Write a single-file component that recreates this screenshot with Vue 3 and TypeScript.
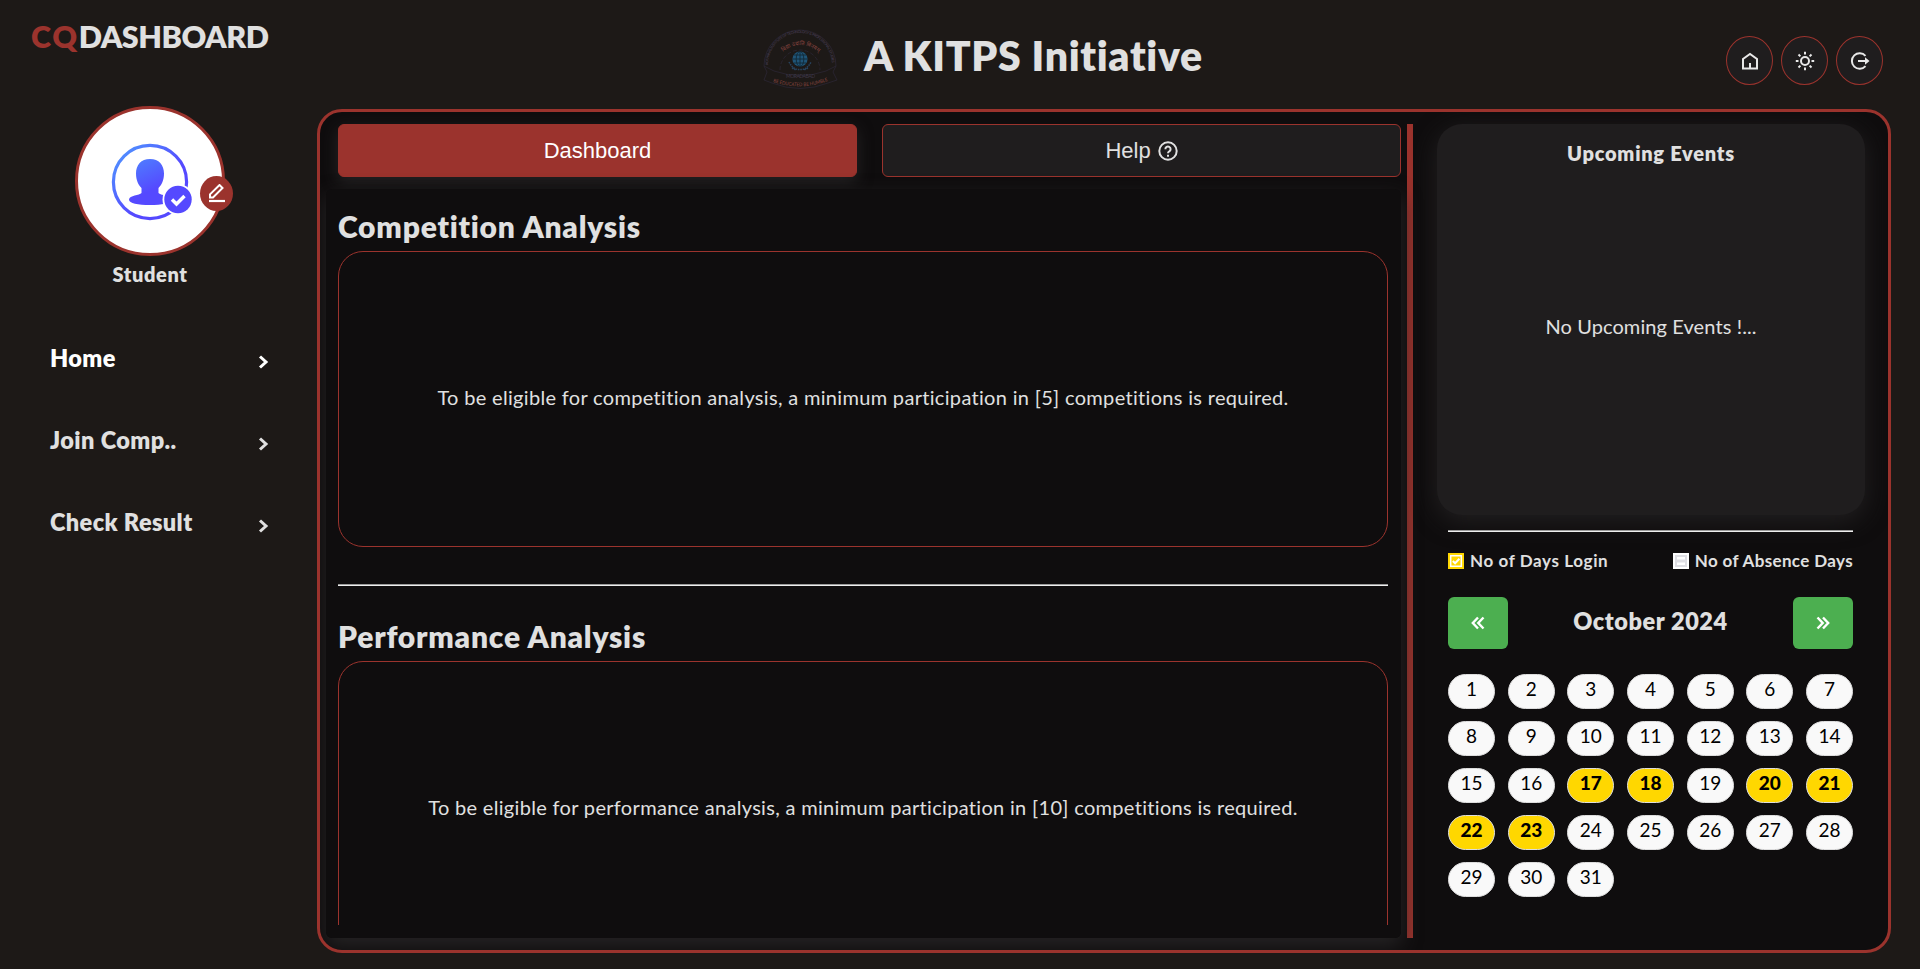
<script setup lang="ts">
interface NavItem { label: string; active: boolean }
const nav: NavItem[] = [
  { label: 'Home', active: true },
  { label: 'Join Comp..', active: false },
  { label: 'Check Result', active: false },
]
const days: number[] = Array.from({ length: 31 }, (_, i) => i + 1)
const loggedIn = new Set<number>([17, 18, 20, 21, 22, 23])
</script>

<template>
  <div class="app">
    <header class="topbar">
      <div class="brand"><span class="cq">CQ</span><span class="dash">DASHBOARD</span></div>
      <div class="initiative">
        <svg class="seal" width="76" height="64" viewBox="0 0 76 64">
          <defs>
            <path id="arc-outer" d="M6 37 A32 32 0 0 1 70 37" />
            <path id="arc-motto" d="M21 24 Q38 10 56 24" />
            <path id="arc-ribbon" d="M11 54 Q38 63 66 53" />
          </defs>
          <g fill="none" stroke="#2b2633" stroke-width=".8">
            <path d="M2 38 A36 36 0 0 1 74 38" />
            <path d="M18 42 A20 20 0 0 1 58 42" stroke-dasharray="4 2" />
            <path d="M2 38l10 5q26 9 52 0l10-5-3 6 4 8-9 3q-28 11-56 0l-8-3 3-8z" />
          </g>
          <text font-size="3.6" fill="#4a4058"><textPath href="#arc-outer" textLength="98">KOTHIWAL INSTITUTE OF TECHNOLOGY &amp; PROFESSIONAL STUDIES</textPath></text>
          <text font-size="5.5" fill="#8a4540"><textPath href="#arc-motto" textLength="39">विद्या ददाति विनयम्</textPath></text>
          <circle cx="38" cy="31" r="7.6" fill="#1f5578" />
          <g fill="none" stroke="#122836" stroke-width=".9">
            <ellipse cx="38" cy="31" rx="3.8" ry="7.6" /><path d="M38 23.400v15.200M30.400 31h15.200M32 27h12M32 35h12" />
          </g>
          <path d="M27 34q4 8 11 7.500q7 .5 11-7.500M30 40l4 2M46 40l-4 2" fill="none" stroke="#28425c" stroke-width="1.500" stroke-dasharray="1.600 .8" />
          <text x="24" y="50" font-size="5" textLength="29" fill="#3d3848">MORADABAD</text>
          <text font-size="5" fill="#85443f"><textPath href="#arc-ribbon" textLength="56" lengthAdjust="spacingAndGlyphs">BE EDUCATED BE HUMBLE</textPath></text>
        </svg>
        <h1 class="title">A KITPS Initiative</h1>
      </div>
      <div class="actions">
        <button class="round"><svg width="18" height="18" viewBox="0 0 18 18"><path d="M2 7v9.500h14V7L9 2z M9 16.500v-5.500" /></svg></button>
        <button class="round"><svg width="20" height="20" viewBox="0 0 20 20"><circle cx="10" cy="10" r="4" /><path d="M10 .8v2.700M10 16.500v2.700M.8 10h2.700M16.500 10h2.700M3.500 3.500l1.900 1.900M14.600 14.600l1.900 1.900M3.500 16.500l1.900-1.900M14.600 5.400l1.900-1.900" /></svg></button>
        <button class="round"><svg width="20" height="20" viewBox="0 0 20 20"><path d="M15.500 4.800A7.800 7.800 0 1 0 15.500 15.200M8 10h8" /><path class="solid" d="M15 6.300l4.500 3.700-4.500 3.700z" /></svg></button>
      </div>
    </header>

    <div class="body">
      <aside class="sidebar">
        <div class="profile">
          <div class="avatar">
            <svg width="144" height="144" viewBox="0 0 144 144">
              <defs>
                <linearGradient id="ring" x1="0" y1="0" x2=".6" y2=".6"><stop offset="0" stop-color="#4f9cff" /><stop offset="1" stop-color="#5549ff" /></linearGradient>
                <linearGradient id="bust" x1=".2" y1="0" x2=".5" y2=".7"><stop offset="0" stop-color="#4f7dff" /><stop offset="1" stop-color="#5549ff" /></linearGradient>
              </defs>
              <circle cx="72" cy="73" r="36.600" fill="none" stroke="url(#ring)" stroke-width="3.200" />
              <path fill="url(#bust)" d="M72 50c-9 0-14 6-14 14.500 0 7 2.500 11.500 5.500 14.500v5c-2 2.500-12 2-12.500 6.500 0 4 9 5.500 21 5.500s21-1.500 21-5.500c-.5-4.500-10.500-4-12.500-6.500v-5c3-3 5.500-7.500 5.500-14.500C86 56 81 50 72 50z" />
              <circle cx="100" cy="90.500" r="15.500" fill="#fff" />
              <circle cx="100" cy="90.500" r="13.700" fill="#5549ff" />
              <path d="M94 90.500l4.500 4.500 8-8" fill="none" stroke="#fff" stroke-width="3.400" />
            </svg>
            <span class="edit"><svg width="18" height="20" viewBox="0 0 18 20"><path d="M2 13.500v-3.200L11.500 1l3 3L5 13.500z" /><path d="M1 17h16" stroke-width="2.200" /></svg></span>
          </div>
          <div class="student">Student</div>
        </div>
        <nav>
          <a v-for="n in nav" :key="n.label" class="item" :class="{ active: n.active }">
            <span>{{ n.label }}</span>
            <svg width="11" height="16" viewBox="0 0 11 16"><path d="M2 2.500L8 8l-6 5.500" /></svg>
          </a>
        </nav>
      </aside>

      <main class="frame">
        <section class="left">
          <div class="tabs">
            <button class="tab on">Dashboard</button>
            <button class="tab">Help
              <svg width="20" height="20" viewBox="0 0 20 20"><circle cx="10" cy="10" r="8.700" /><path d="M7.400 8.200a2.600 2.600 0 1 1 4 2.100c-1 .7-1.400 1-1.400 1.900M10 13.800v1.900" /></svg>
            </button>
          </div>
          <div class="panel">
            <h2>Competition Analysis</h2>
            <div class="card">To be eligible for competition analysis, a minimum participation in [5] competitions is required.</div>
            <hr />
            <h2>Performance Analysis</h2>
            <div class="card">To be eligible for performance analysis, a minimum participation in [10] competitions is required.</div>
          </div>
        </section>
        <div class="divider"></div>
        <section class="right">
          <div class="events">
            <h3>Upcoming Events</h3>
            <p>No Upcoming Events !...</p>
          </div>
          <div class="cal">
            <hr />
            <div class="legend">
              <span class="key login"><svg width="16" height="16" viewBox="0 0 16 16"><path fill="#ffd700" d="M0 0h16v16H0z" /><path fill="none" stroke="#fff" stroke-width="1.500" d="M2.700 2.700h10.600v10.600H2.700z" /><path d="M4.800 8l2.300 2.300 4.300-4.600" fill="none" stroke="#fff" stroke-width="2" /></svg>No of Days Login</span>
              <span class="key"><svg width="16" height="16" viewBox="0 0 16 16"><path fill="#fff" d="M0 0h16v16H0z" /><path fill="#dfdfe4" d="M2 2h12v12H2z" /><path fill="#fff" d="M4 4h8v2.500H4zM4 9.500h8V12H4z" /></svg>No of Absence Days</span>
            </div>
            <div class="switcher">
              <button><svg width="14" height="14" viewBox="0 0 14 14"><path d="M7 1.500L1.800 7 7 12.500M12.500 1.500L7.300 7l5.200 5.500" /></svg></button>
              <span class="month">October 2024</span>
              <button><svg width="14" height="14" viewBox="0 0 14 14"><path d="M1.500 1.500L6.700 7l-5.200 5.500M7 1.500L12.200 7 7 12.500" /></svg></button>
            </div>
            <div class="days">
              <span v-for="d in days" :key="d" class="day" :class="{ present: loggedIn.has(d) }">{{ d }}</span>
            </div>
          </div>
        </section>
      </main>
    </div>
  </div>
</template>

<style>
body { margin: 0; background: #1d1917; }
</style>

<style scoped>
* { box-sizing: border-box; }
.app { width: 1920px; height: 969px; overflow: hidden; background: #1d1917; color: #e0e0e0; font-family: Lato, "Noto Sans", sans-serif; font-variant-ligatures: none; }
button { padding: 0; border: 0; color: inherit; }
h1, h2, h3, p { margin: 0; font-weight: 800; }
svg { display: block; flex: none; }

.topbar { display: flex; height: 109px; padding: 0 37px 0 31px; }
.brand { width: 731px; padding-top: 18px; font-size: 30.5px; font-weight: 800; line-height: 37px; white-space: nowrap; }
.cq { color: #9b332d; letter-spacing: 1.7px; }
.dash { letter-spacing: -.5px; }
.initiative { display: flex; flex: 1; gap: 26px; padding-top: 28px; }
.title { padding-top: 1px; font-size: 41px; line-height: 53px; letter-spacing: .67px; white-space: nowrap; }
.actions { display: flex; gap: 8px; padding-top: 36px; }
.round { display: grid; place-items: center; width: 47px; height: 49px; border: 1px solid #9b332d; border-radius: 50%; background: #1f1d1e; }
.round svg { fill: none; stroke: #e8e8e8; stroke-width: 2; }
.round .solid { fill: #e8e8e8; stroke: none; }

.body { display: flex; }
.sidebar { width: 317px; }
.profile { display: flex; flex-direction: column; align-items: center; width: 300px; margin-top: -3px; }
.avatar { position: relative; width: 150px; height: 150px; border: 3px solid #9b332d; border-radius: 50%; background: #fff; }
.edit { position: absolute; left: 122px; top: 67px; display: grid; place-items: center; width: 33px; height: 35px; border-radius: 50%; background: #9b332d; }
.edit svg { fill: none; stroke: #fff; stroke-width: 2; }
.student { margin-top: 6px; font-size: 20px; font-weight: 800; line-height: 24px; letter-spacing: .6px; }
nav { margin-top: 31px; }
.item { display: flex; align-items: center; justify-content: space-between; height: 82px; padding: 0 48px 0 50px; font-size: 23.5px; font-weight: 800; line-height: 30px; letter-spacing: .4px; }
.item.active { color: #fff; }
.item svg { margin-top: 8px; fill: none; stroke: currentColor; stroke-width: 3; }

.frame { display: flex; width: 1574px; height: 844px; padding: 12px 23px 12px 6px; border: 3px solid #9b332d; border-radius: 25px; background: #0f0d0e; overflow: hidden; }
.left { width: 1075px; }
.tabs { display: flex; gap: 25px; padding-left: 12px; }
.tab { display: flex; align-items: center; justify-content: center; gap: 7px; flex: 1; height: 53px; border: 1px solid #9b332d; border-radius: 6px; background: #1f1d1e; font: 22px "Liberation Sans", Arial, sans-serif; }
.tab svg { fill: none; stroke: currentColor; stroke-width: 2; }
.tab.on { background: #9b332d; color: #fff; box-shadow: 0 5px 15px #262425; }
.panel { position: relative; height: 749px; margin-top: 12px; padding: 20px 13px 0 12px; border-radius: 6px; background: #0f0d0e; box-shadow: 0 8px 20px #262425; overflow: hidden; }
.panel::after { content: ""; position: absolute; left: 0; right: 0; bottom: 0; height: 13px; background: #0f0d0e; }
h2 { height: 42px; font-size: 30px; line-height: 34px; letter-spacing: .78px; }
.card { display: grid; place-items: center; height: 296px; padding-bottom: 5px; border: 1px solid #9b332d; border-radius: 25px; font-size: 20px; letter-spacing: .32px; white-space: nowrap; }
hr { height: 2px; margin: 0; border: 0; border-top: 1px solid #9a9a9a; border-bottom: 1px solid #eee; }
.panel hr { margin: 37px 0 33px; }
.divider { flex: none; width: 6px; margin-left: 6px; background: #9b332d; }
.right { width: 428px; margin-left: 24px; }
.events { height: 391px; border-radius: 25px; background: #1f1d1e; box-shadow: 0 6px 24px #222021; text-align: center; }
.events h3 { padding-top: 16px; font-size: 20px; line-height: 26px; letter-spacing: .74px; }
.events p { padding-top: 146px; font-size: 20px; font-weight: 400; line-height: 28px; letter-spacing: .1px; }
.cal { padding: 15px 12px 0 11px; }
.legend { display: flex; justify-content: space-between; height: 65px; padding-top: 21px; }
.key { display: flex; gap: 6px; height: 16px; font-size: 17px; font-weight: 700; line-height: 16px; letter-spacing: .36px; white-space: nowrap; }
.key.login { letter-spacing: .6px; }
.switcher { display: flex; align-items: center; justify-content: space-between; height: 52px; }
.switcher button { display: grid; place-items: center; width: 60px; height: 52px; border-radius: 6px; background: #4caf50; }
.switcher svg { fill: none; stroke: #fff; stroke-width: 2.4; }
.month { padding-bottom: 5px; font-size: 23.5px; font-weight: 800; letter-spacing: .58px; }
.days { display: grid; grid-template-columns: repeat(7, 1fr); gap: 12px 12.6px; margin-top: 25px; }
.day { height: 35px; border: 1px solid #ddd; border-radius: 18px; background: #f9f9f9; color: #000; font-size: 19px; line-height: 28px; text-align: center; }
.day.present { background: #ffd700; font-weight: 900; }
</style>
